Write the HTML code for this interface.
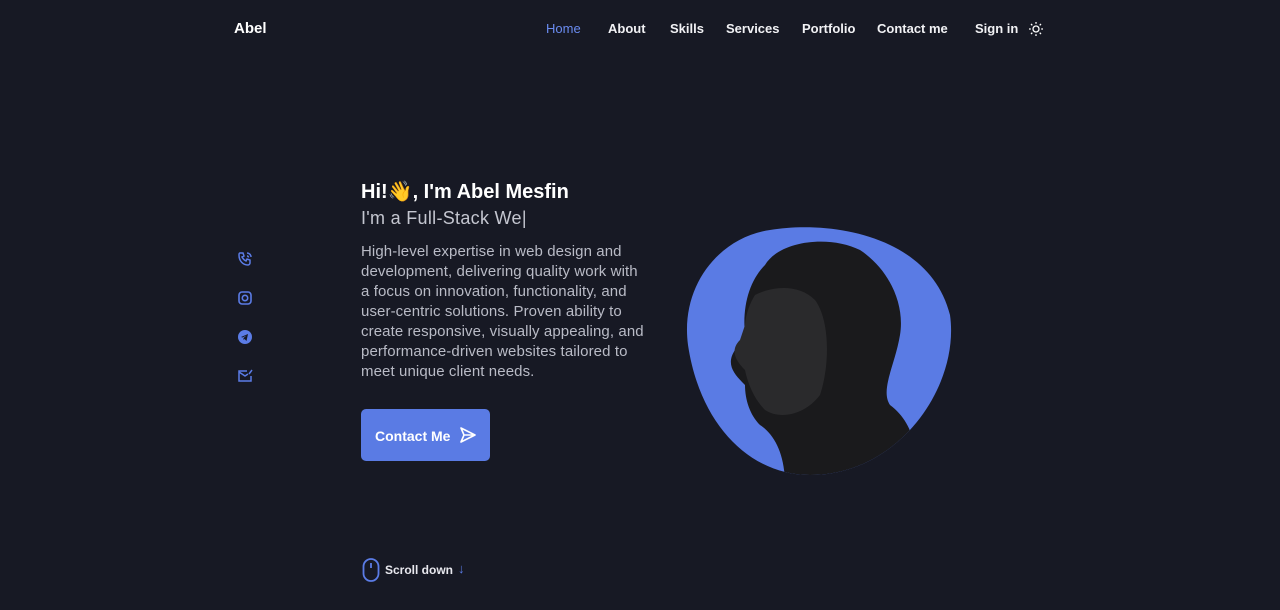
<!DOCTYPE html>
<html><head><meta charset="utf-8"><style>
*{margin:0;padding:0;box-sizing:border-box}
body{width:1280px;height:610px;background:#171924;font-family:"Liberation Sans",sans-serif;color:#fff;position:relative;overflow:hidden}
.a{position:absolute;white-space:nowrap}
nav span{position:absolute;top:21px;font-size:13px;font-weight:bold;color:#f1f1f4}
.p{font-size:15px;line-height:20px;color:#b9bbc6;letter-spacing:0.1px}
</style></head><body>
<div class="a" style="left:234px;top:20px;font-size:15px;font-weight:bold">Abel</div>
<nav>
<span style="left:546px;color:#6a8bf0;font-weight:normal">Home</span>
<span style="left:608px">About</span>
<span style="left:670px">Skills</span>
<span style="left:726px">Services</span>
<span style="left:802px">Portfolio</span>
<span style="left:877px">Contact me</span>
<span style="left:975px">Sign in</span>
</nav>
<svg class="a" style="left:1029px;top:22px" width="14" height="14" viewBox="0 0 14 14" fill="none" stroke="#fff" stroke-width="1.3"><circle cx="7" cy="7" r="3"/><path d="M7 0v1.8M7 12.2V14M0 7h1.8M12.2 7H14M2 2l1.3 1.3M10.7 10.7L12 12M2 12l1.3-1.3M10.7 3.3L12 2"/></svg>
<div class="a" style="left:361px;top:179px;font-size:20px;font-weight:bold">Hi!👋, I'm Abel Mesfin</div>
<div class="a" style="left:361px;top:208px;font-size:18px;color:#c4c6d0;letter-spacing:0.3px">I'm a Full-Stack We|</div>
<div class="a p" style="left:361px;top:242px">High-level expertise in web design and<br>development, delivering quality work with<br>a focus on innovation, functionality, and<br>user-centric solutions. Proven ability to<br>create responsive, visually appealing, and<br>performance-driven websites tailored to<br>meet unique client needs.</div>
<svg class="a" style="left:237px;top:251px" width="16" height="16" viewBox="0 0 16 16" fill="none" stroke="#5b7ce6" stroke-width="1.5"><path d="M3 2h3l1 3-2 1c1 2 2 3 4 4l1-2 3 1v3c0 1-1 2-2 2C6 14 2 10 2 4c0-1 0-2 1-2z"/><path d="M10 2a4 4 0 0 1 4 4M10 5a1.5 1.5 0 0 1 1.5 1.5"/></svg>
<svg class="a" style="left:238px;top:291px" width="14" height="14" viewBox="0 0 14 14" fill="none" stroke="#5b7ce6" stroke-width="1.6"><rect x="1" y="1" width="12" height="12" rx="3"/><circle cx="7" cy="7" r="2.7"/></svg>
<svg class="a" style="left:238px;top:330px" width="14" height="14" viewBox="0 0 14 14"><circle cx="7" cy="7" r="7" fill="#5b7ce6"/><path d="M3 7l7-3-1.5 7-2-2-1 1v-2l3-2.5-4 2z" fill="#171924"/></svg>
<svg class="a" style="left:238px;top:369px" width="15" height="14" viewBox="0 0 15 14" fill="none" stroke="#5b7ce6" stroke-width="1.5"><path d="M9 2H1v10h12V7"/><path d="M1 3l6 4 3-2M11 5l3-4"/></svg>
<div class="a" style="left:361px;top:409px;width:129px;height:52px;background:#5a7be4;border-radius:5px;font-size:14px;font-weight:bold;padding:19px 0 0 14px">Contact Me</div>
<svg class="a" style="left:459px;top:427px" width="17" height="16" viewBox="0 0 17 16" fill="none" stroke="#fff" stroke-width="1.6" stroke-linejoin="round"><path d="M2 1l14 7-14 7 3-7z M5 8h11"/></svg>
<svg class="a" style="left:362px;top:558px" width="18" height="24" viewBox="0 0 18 24" fill="none" stroke="#5b7ce6" stroke-width="1.8"><rect x="1.5" y="1" width="15" height="22" rx="7.5"/><path d="M9 5v5"/></svg>
<div class="a" style="left:385px;top:563px;font-size:12px;font-weight:bold;color:#e8e8ee">Scroll down</div>
<div class="a" style="left:458px;top:561px;font-size:13px;color:#5b7ce6">↓</div>
<svg class="a" style="left:680px;top:225px" width="275" height="255" viewBox="0 0 275 255">
<defs><clipPath id="c"><path d="M90 5C150 -5 250 10 270 90C280 160 220 250 130 250C70 250 20 200 8 120C0 60 40 12 90 5Z"/></clipPath></defs>
<path d="M90 5C150 -5 250 10 270 90C280 160 220 250 130 250C70 250 20 200 8 120C0 60 40 12 90 5Z" fill="#5a7be4"/>
<g clip-path="url(#c)">
<path d="M85 40C100 15 150 10 180 25C210 45 225 80 220 110C215 140 200 165 210 180C230 195 240 220 235 260L105 260C105 230 95 210 80 200C70 190 65 175 65 160C55 150 45 140 55 125L65 110C62 80 70 55 85 40Z" fill="#1a1a1c"/>
<path d="M75 70C95 60 120 60 135 75C150 95 150 140 140 170C125 190 100 195 85 185C75 175 68 160 65 145C55 135 50 125 60 115L65 100C66 88 70 78 75 70Z" fill="#2a2a2c"/>
</g></svg>
</body></html>
